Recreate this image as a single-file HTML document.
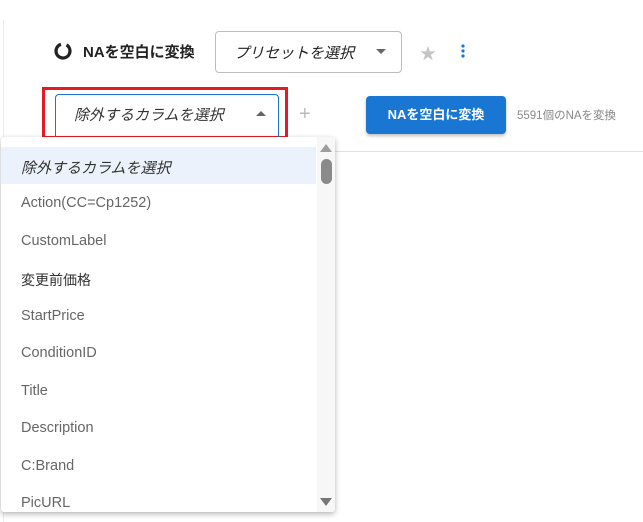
<!DOCTYPE html>
<html><head><meta charset="utf-8"><style>
html,body{margin:0;width:643px;height:522px;overflow:hidden}
body{background:#fff;position:relative;font-family:"Liberation Sans","Noto Sans CJK JP",sans-serif;color:#333}
.a{position:absolute}
.card{left:3px;top:20px;width:1px;height:502px;background:#ececec}
.hr{left:270px;top:151px;width:380px;height:1px;background:#e0e0e0}
.item{position:absolute;left:20px;font-size:14.5px;color:#666}
</style></head><body>
<div class="a card"></div>
<div class="a hr"></div>
<svg class="a" style="left:53px;top:41px" width="20" height="20" viewBox="0 0 20 20"><circle cx="10" cy="10" r="7" fill="none" stroke="#222" stroke-width="3.2" stroke-dasharray="38 6" transform="rotate(-60 10 10)"/></svg>
<div class="a" style="left:83px;top:41px;font-size:15px;font-weight:bold;color:#222">NAを空白に変換</div>
<div class="a" style="left:215px;top:31px;width:185px;height:40px;border:1px solid #bdbdbd;border-radius:4px"></div>
<div class="a" style="left:234px;top:42px;font-size:15px;font-style:italic;color:#222">プリセットを選択</div>
<div class="a" style="left:376px;top:49px;border-left:5px solid transparent;border-right:5px solid transparent;border-top:5px solid #666"></div>
<div class="a" style="left:420px;top:40px;font-size:16px;color:#c4c4c4">★</div>
<svg class="a" style="left:460px;top:43px" width="6" height="16"><circle cx="3" cy="3" r="1.6" fill="#1976d2"/><circle cx="3" cy="8" r="1.6" fill="#1976d2"/><circle cx="3" cy="13" r="1.6" fill="#1976d2"/></svg>
<div class="a" style="left:42px;top:87px;width:240px;height:46px;border:3px solid #e51b23"></div>
<div class="a" style="left:55px;top:94px;width:222px;height:42px;border:1px solid #1976d2;border-bottom:none;border-radius:4px 4px 0 0"></div>
<div class="a" style="left:74px;top:104px;font-size:15px;font-style:italic;color:#333">除外するカラムを選択</div>
<div class="a" style="left:256px;top:111px;border-left:5px solid transparent;border-right:5px solid transparent;border-bottom:5px solid #666"></div>
<div class="a" style="left:299px;top:102px;font-size:20px;color:#bbb;line-height:24px">+</div>
<div class="a" style="left:366px;top:96px;width:140px;height:38px;background:#1976d2;border-radius:4px;box-shadow:0 2px 3px rgba(0,0,0,.25);color:#fff;font-size:13px;font-weight:bold;text-align:center;line-height:38px">NAを空白に変換</div>
<div class="a" style="left:517px;top:107px;font-size:11.5px;color:#888">5591個のNAを変換</div>
<div class="a" style="left:1px;top:137px;width:334px;height:375px;background:#fff;box-shadow:0 2px 6px rgba(0,0,0,.3);overflow:hidden;border-radius:3px">
<div class="a" style="left:0;top:10px;width:315px;height:37px;background:#ebf2fb"></div>
<div class="a" style="left:316px;top:0;width:18px;height:375px;background:#f7f7f7"></div>
<div class="a" style="left:319px;top:7px;border-left:6px solid transparent;border-right:6px solid transparent;border-bottom:8px solid #9e9e9e"></div>
<div class="a" style="left:320px;top:22px;width:11px;height:25px;background:#8a8a8a;border-radius:6px"></div>
<div class="a" style="left:319px;top:361px;border-left:6px solid transparent;border-right:6px solid transparent;border-top:8px solid #777"></div>
<div class="item" style="top:20px;font-style:italic;color:#333;font-size:15px">除外するカラムを選択</div>
<div class="item" style="top:58px">Action(CC=Cp1252)</div>
<div class="item" style="top:96px">CustomLabel</div>
<div class="item" style="top:133px;color:#333;font-size:14px">変更前価格</div>
<div class="item" style="top:171px">StartPrice</div>
<div class="item" style="top:208px">ConditionID</div>
<div class="item" style="top:246px">Title</div>
<div class="item" style="top:283px">Description</div>
<div class="item" style="top:321px">C:Brand</div>
<div class="item" style="top:358px">PicURL</div>
</div>
</body></html>
